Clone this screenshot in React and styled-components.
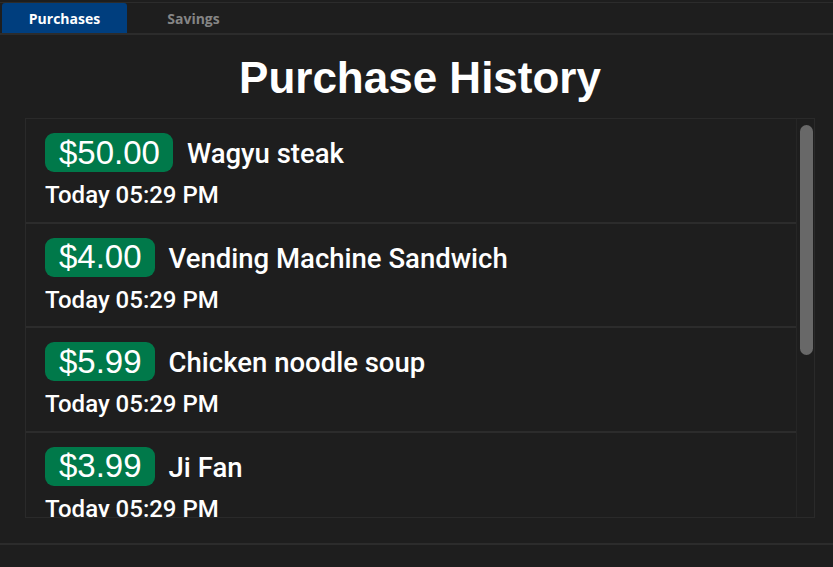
import React, { useState } from 'react';
import styled, { createGlobalStyle } from 'styled-components';

const purchases = [
  { id: 1, price: '$50.00', name: 'Wagyu steak', time: 'Today 05:29 PM' },
  { id: 2, price: '$4.00', name: 'Vending Machine Sandwich', time: 'Today 05:29 PM' },
  { id: 3, price: '$5.99', name: 'Chicken noodle soup', time: 'Today 05:29 PM' },
  { id: 4, price: '$3.99', name: 'Ji Fan', time: 'Today 05:29 PM' },
];

const GlobalStyle = createGlobalStyle`
  html, body {
    margin: 0;
    padding: 0;
    background: #1e1e1e;
  }
  * {
    box-sizing: border-box;
  }
`;

function App() {
  const [tab, setTab] = useState('purchases');

  return (
    <MainWrapper>
      <GlobalStyle />
      <TabBar>
        <Tab active={tab === 'purchases'} onClick={() => setTab('purchases')}>
          Purchases
        </Tab>
        <Tab active={tab === 'savings'} onClick={() => setTab('savings')}>
          Savings
        </Tab>
      </TabBar>
      <Content>
        <Title>Purchase History</Title>
        <ListBox>
          <List>
            {purchases.map((item) => (
              <Item key={item.id}>
                <ItemTop>
                  <Price>{item.price}</Price>
                  <Name>{item.name}</Name>
                </ItemTop>
                <Time>{item.time}</Time>
              </Item>
            ))}
          </List>
          <ScrollTrack>
            <ScrollThumb />
          </ScrollTrack>
        </ListBox>
      </Content>
      <Footer />
    </MainWrapper>
  );
}

const MainWrapper = styled.div`
  width: 833px;
  height: 567px;
  display: flex;
  flex-direction: column;
  background: #1e1e1e;
  overflow: hidden;
`;

const TabBar = styled.div`
  display: flex;
  margin-top: 2px;
  height: 33px;
  padding-left: 2px;
  border-top: 1px solid #2c2c2c;
  border-bottom: 2px solid #2c2c2c;
`;

const Tab = styled.button`
  width: 125px;
  height: 100%;
  border: none;
  border-radius: 3px 3px 0 0;
  background: ${(p) => (p.active ? '#003e7e' : 'transparent')};
  color: ${(p) => (p.active ? '#ffffff' : '#858585')};
  font-family: 'Open Sans', 'Liberation Sans', sans-serif;
  font-weight: 700;
  font-size: 14px;
  padding: 0;
  cursor: pointer;
  outline: none;
  margin-right: 4px;
`;

const Content = styled.div`
  flex: 1;
  display: flex;
  flex-direction: column;
  align-items: center;
  padding: 0 18px 0 25px;
`;

const Title = styled.h1`
  margin: 15px 0 0;
  height: 68px;
  font-family: 'Liberation Sans', Arial, sans-serif;
  font-weight: 700;
  font-size: 44px;
  line-height: 56px;
  color: #ffffff;
`;

const ListBox = styled.div`
  display: flex;
  width: 790px;
  height: 400px;
  border: 1px solid #2a2a2a;
`;

const List = styled.div`
  flex: 1;
  overflow: hidden;
`;

const ScrollTrack = styled.div`
  width: 18px;
  padding: 6px 1px 0 3px;
  border-left: 1px solid #262626;
`;

const ScrollThumb = styled.div`
  height: 230px;
  border-radius: 7px;
  background: #686868;
`;

const Item = styled.div`
  display: flex;
  flex-direction: column;
  padding: 14px 19px 0;
  height: 104.5px;
  border-bottom: 2px solid #2c2c2c;
`;

const ItemTop = styled.div`
  display: flex;
  align-items: center;
  gap: 14px;
`;

const Price = styled.span`
  display: inline-flex;
  align-items: center;
  height: 39px;
  padding: 0 13px 0 14px;
  border-radius: 9px;
  background: #00794a;
  color: #ffffff;
  font-family: 'Liberation Sans', Arial, sans-serif;
  font-size: 33px;
`;

const Name = styled.span`
  color: #ffffff;
  font-family: Roboto, 'Liberation Sans', sans-serif;
  font-weight: 500;
  font-size: 27.5px;
  padding-top: 2px;
`;

const Time = styled.div`
  margin-top: 8px;
  color: #ffffff;
  font-family: Roboto, 'Liberation Sans', sans-serif;
  font-weight: 500;
  font-size: 24px;
  line-height: 30px;
  white-space: nowrap;
`;

const Footer = styled.div`
  height: 24px;
  border-top: 2px solid #2c2c2c;
`;

export default App;
